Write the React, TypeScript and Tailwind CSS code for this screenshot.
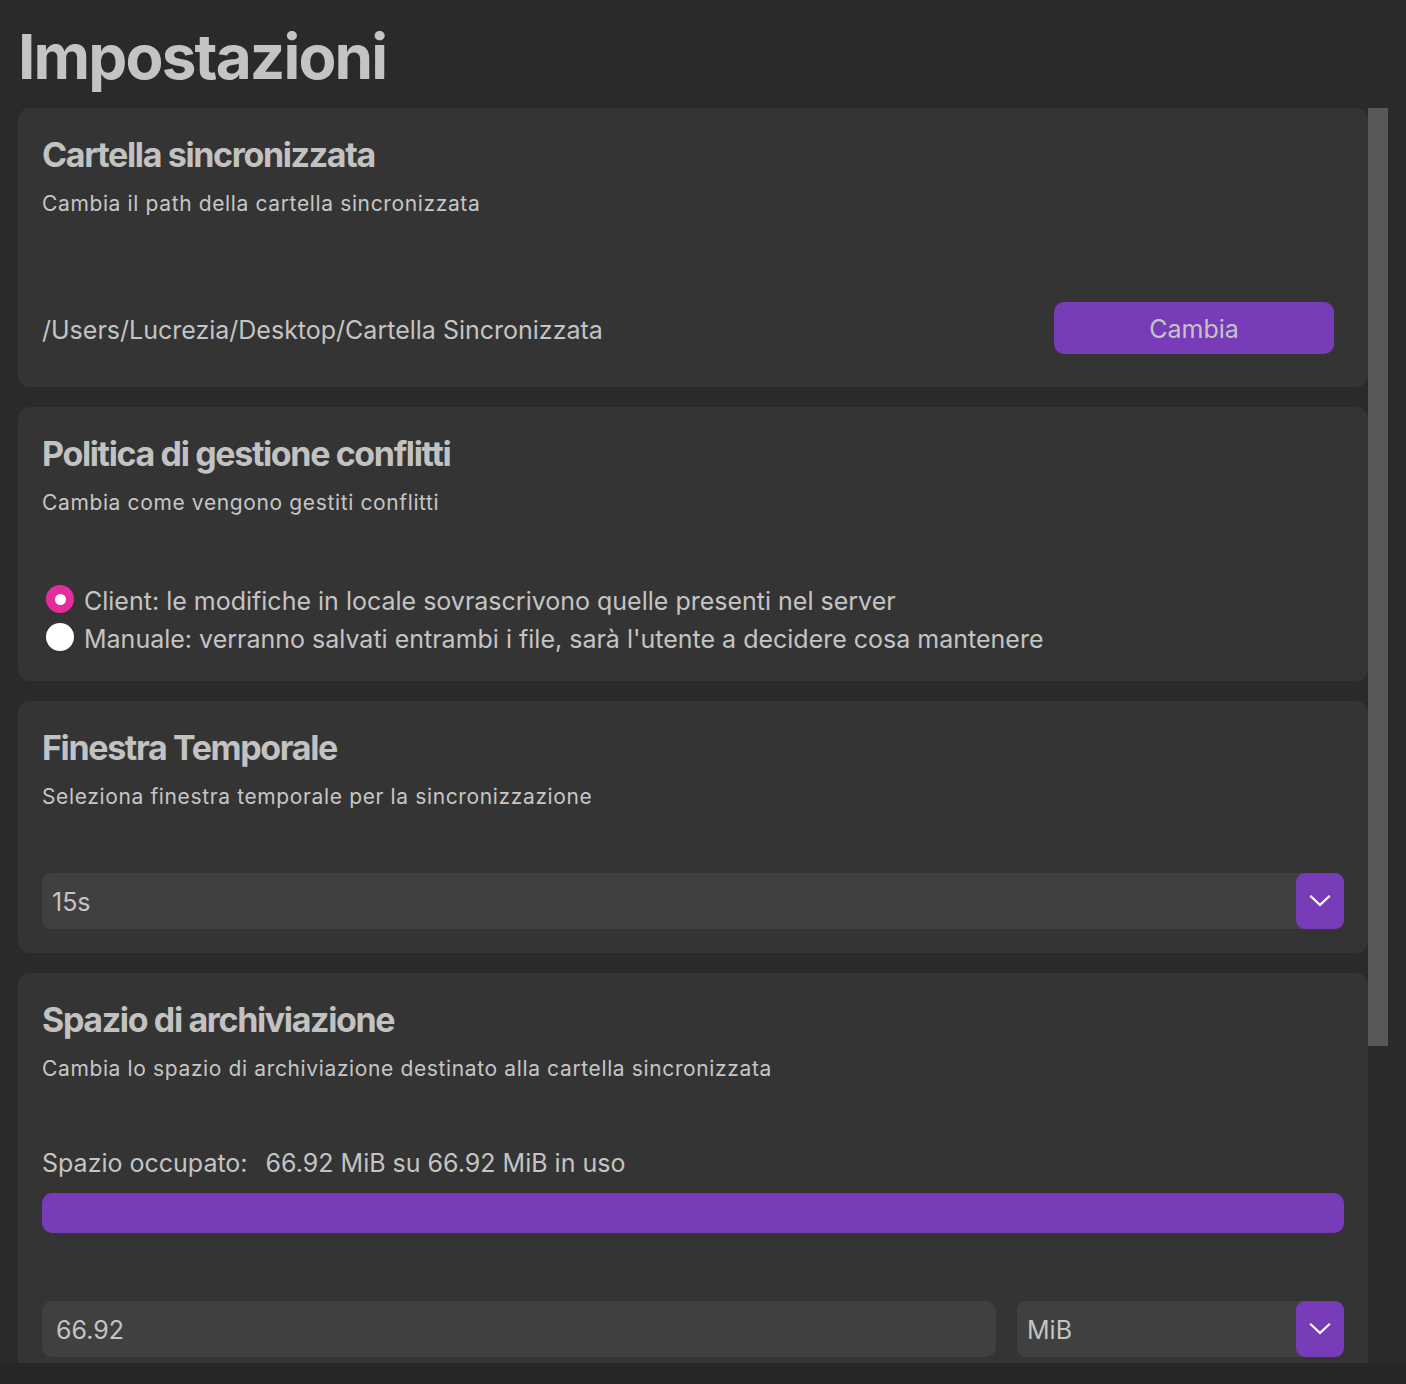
import React, { useState } from 'react';

const PURPLE = 'bg-[#783cb9]';

function Chevron() {
  return (
    <svg width="22" height="14" viewBox="0 0 22 14" fill="none">
      <path d="M2 2.5 L11 11 L20 2.5" stroke="white" strokeWidth="2.2" strokeLinecap="square" />
    </svg>
  );
}

function Card({ title, desc, className, children }: { title: string; desc: string; className?: string; children: React.ReactNode }) {
  return (
    <section className={`bg-[#343434] rounded-[12px] pl-6 pr-6 pt-[27px] ${className ?? ''}`}>
      <h2 className="text-[34px] leading-[40px] font-bold tracking-[-0.04em] text-[#c2c2c2]">{title}</h2>
      <p className="mt-[15px] text-[21px] leading-[28px] tracking-[0.03em] text-[#c6c6c6]">{desc}</p>
      {children}
    </section>
  );
}

function SelectBox({ value, className }: { value: string; className?: string }) {
  return (
    <div className={`flex h-[56px] items-center rounded-[9px] bg-[#404040] ${className ?? ''}`}>
      <span className="flex-1 translate-y-[2px] pl-[10px] text-[25px] text-[#c4c4c4]">{value}</span>
      <div className={`flex h-[56px] w-[48px] items-center justify-center rounded-[9px] ${PURPLE}`}>
        <Chevron />
      </div>
    </div>
  );
}

export default function App() {
  const [policy, setPolicy] = useState('client');

  const options = [
    { id: 'client', label: 'Client: le modifiche in locale sovrascrivono quelle presenti nel server' },
    { id: 'manual', label: "Manuale: verranno salvati entrambi i file, sarà l'utente a decidere cosa mantenere" },
  ];

  return (
    <div className="h-[1384px] w-[1406px] overflow-hidden bg-[#2a2a2a] font-['Inter',sans-serif] text-[#c4c4c4]">
      <div className="h-[108px] pl-[18px] pt-[26px]">
        <h1 className="text-[62px] leading-[62px] font-bold tracking-[-0.03em] text-[#c4c4c4]">Impostazioni</h1>
      </div>

      <div className="flex h-[1255px] overflow-hidden pl-[18px]">
        <div className="flex w-[1350px] shrink-0 flex-col gap-5 text-[25px]">
          <Card title="Cartella sincronizzata" desc="Cambia il path della cartella sincronizzata" className="pb-[33px]">
            <div className="mt-[84px] flex items-center justify-between">
              <span className="translate-y-[2px] leading-[32px]">/Users/Lucrezia/Desktop/Cartella Sincronizzata</span>
              <button className={`mr-[10px] h-[52px] w-[280px] rounded-[10px] text-[25px] text-[#c4c4c4] ${PURPLE}`}>
                <span className="inline-block translate-y-[2px]">Cambia</span>
              </button>
            </div>
          </Card>

          <Card title="Politica di gestione conflitti" desc="Cambia come vengono gestiti conflitti" className="pb-[25px]">
            <div className="mt-[63px]">
              {options.map((o) => (
                <label key={o.id} className="flex h-[38px] cursor-pointer items-center">
                  <span
                    onClick={() => setPolicy(o.id)}
                    className={`ml-[4px] mr-[10px] flex h-[28px] w-[28px] items-center justify-center rounded-full ${
                      policy === o.id ? 'bg-[#e62b9d]' : 'bg-white'
                    }`}
                  >
                    {policy === o.id && <span className="h-[11px] w-[11px] rounded-full bg-white" />}
                  </span>
                  <span className="translate-y-[2px] leading-[32px]">{o.label}</span>
                </label>
              ))}
            </div>
          </Card>

          <Card title="Finestra Temporale" desc="Seleziona finestra temporale per la sincronizzazione" className="pb-[24px]">
            <SelectBox value="15s" className="mt-[62px]" />
          </Card>

          <Card title="Spazio di archiviazione" desc="Cambia lo spazio di archiviazione destinato alla cartella sincronizzata" className="pb-[25px]">
            <div className="mt-[64px] leading-[32px]">
              Spazio occupato:<span className="ml-[18px]">66.92 MiB su 66.92 MiB in uso</span>
            </div>
            <div className={`mt-[14px] h-[40px] w-full rounded-[10px] ${PURPLE}`} />
            <div className="mt-[68px] flex gap-[21px]">
              <div className="flex h-[56px] w-[954px] items-center rounded-[10px] bg-[#404040] pl-[14px]">
                <span className="translate-y-[2px]">66.92</span>
              </div>
              <SelectBox value="MiB" className="flex-1" />
            </div>
          </Card>
        </div>
        <div className="w-[20px] shrink-0">
          <div className="h-[938px] bg-[#585858]" />
        </div>
      </div>

      <div className="h-[21px] bg-[#262626]" />
    </div>
  );
}
